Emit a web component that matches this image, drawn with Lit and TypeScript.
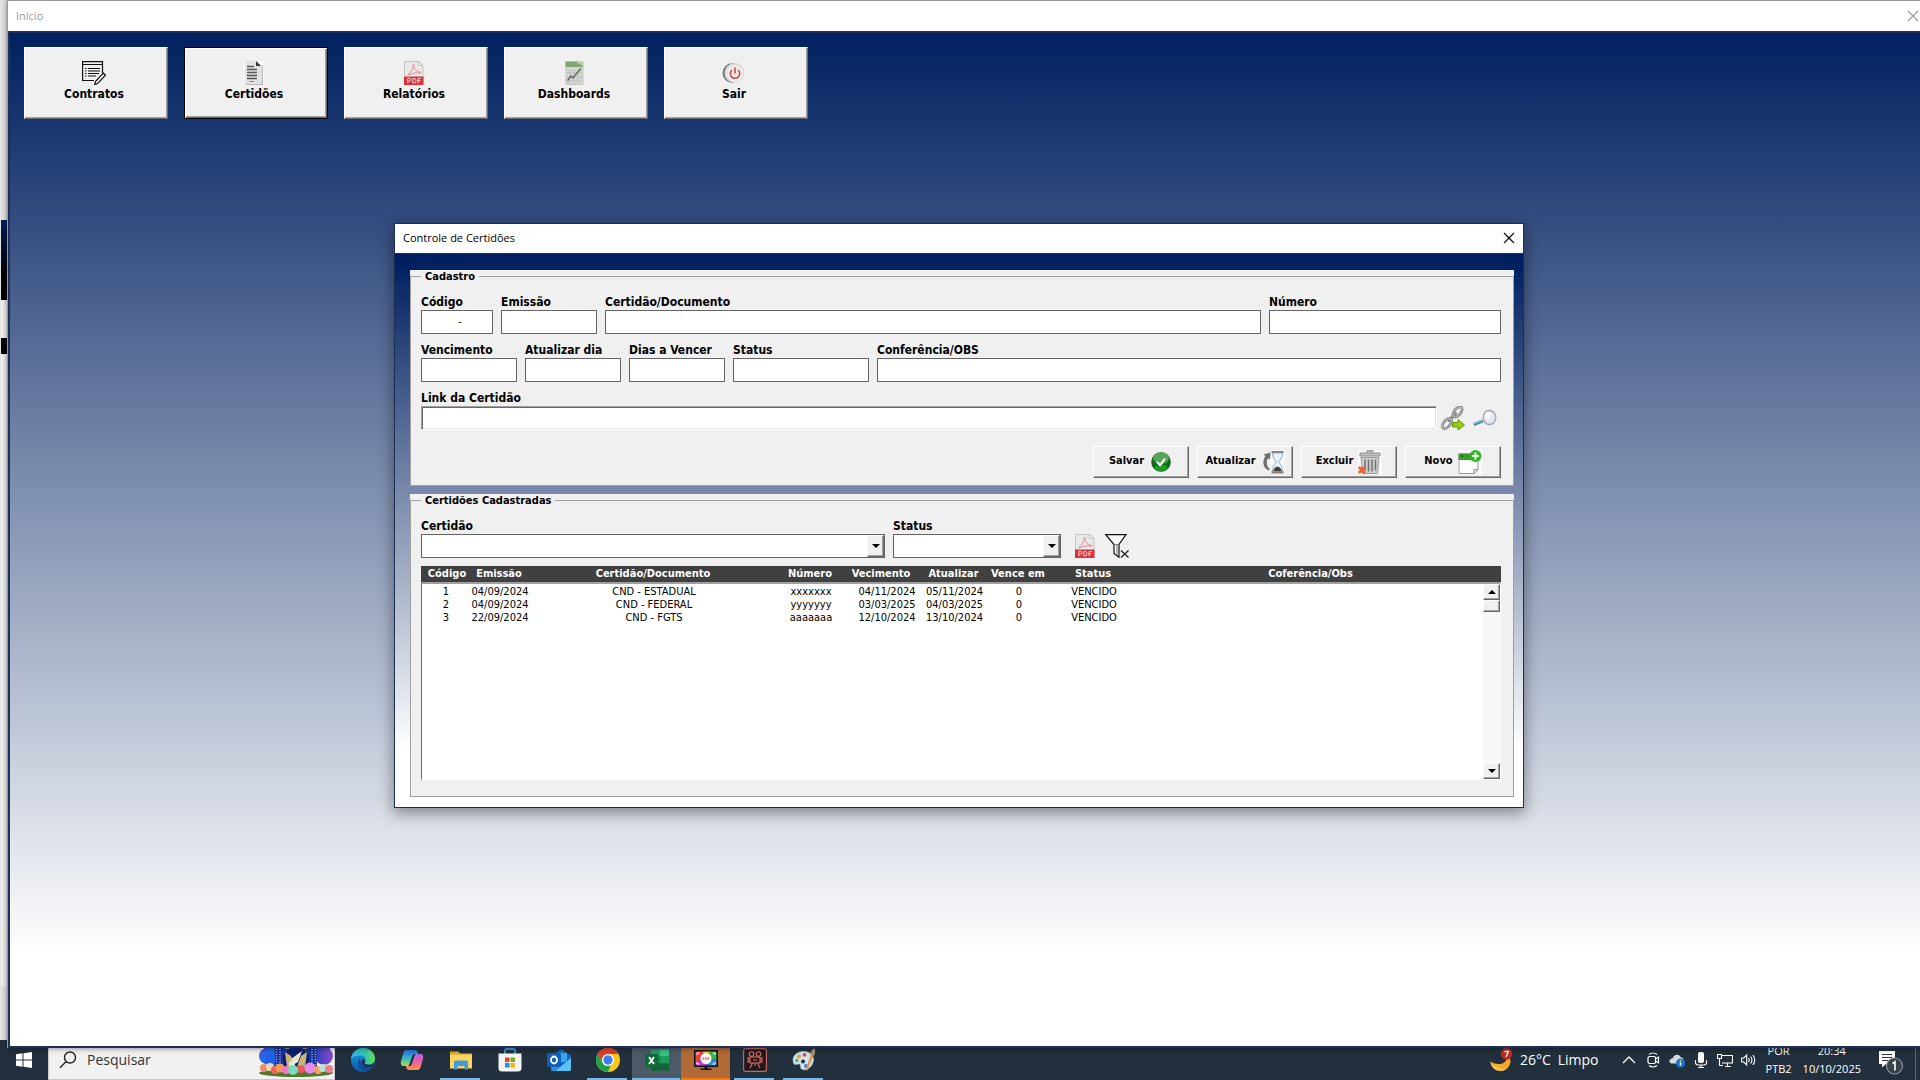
import { LitElement, html, svg, css, type TemplateResult } from "lit";
import { customElement, property } from "lit/decorators.js";

type Shape = { box: string; body: TemplateResult };

const shapes: Record<string, Shape> = {
  pdf: {
    box: "0 0 24 24",
    body: svg`
      <path d="M2.500 .5h14l4.500 4V23.500H2.500z" fill="#e9e9e9" stroke="#c4c4c4"/>
      <path d="M16.500 .5v4h4.500z" fill="#fafafa" stroke="#c4c4c4"/>
      <path d="M6 13.300c2.500-1.500 5-5.800 5.300-9.300.1-.9 1.100-.7.9.2-.6 3 2 6.800 6.300 7.100.8.100.7 1-.2.900-3.800-.8-7.800-.2-11.300 1.500-1 .6-1.700.2-1-.4z" fill="none" stroke="#e8838c" stroke-width="1"/>
      <rect x="2" y="15.500" width="19.500" height="8.500" fill="#dc303a"/>
      <path d="M5.800 22.200v-5h1.600q1.500 0 1.500 1.500T7.400 20.200H6M10.800 17.500v4.400h1.200q2 0 2-2.200t-2-2.200zM16 22.200v-4.700h3M16 19.700h2.500" fill="none" stroke="#fbd9db" stroke-width="1"/>`,
  },
  contract: {
    box: "0 0 24 24",
    body: svg`
      <path d="M12 19.500H.6V.6H20.500V12" fill="none" stroke="#111" stroke-width="1.200"/>
      <path d="M.6 3.500H20.500" stroke="#111"/>
      <path d="M3 7.500h1.500M6 7.500h12M3 10h1.500M6 10h12M3 12.500h1.500M6 12.500h11M3 15h1.500M6 15h8" stroke="#111" stroke-width="1.200"/>
      <path d="M13.500 20.500 21.300 12.200l2.200 2-7.900 8.300-3 1z" fill="#fff" stroke="#111" stroke-width="1.200"/>`,
  },
  document: {
    box: "0 0 24 24",
    body: svg`
      <rect x="2" y="0" width="20" height="24" fill="#fafafa"/>
      <path d="M3 0h11l6 5v18H3z" fill="#e2e2e2"/><path d="M20 5v18H3l1 1h17V5z" fill="#b5b5b5"/>
      <path d="M14 0v5h5z" fill="#333"/>
      <path d="M5 5.500h7M5 8.500h10M5 11.500h10M5 14.500h10M5 17.500h10" stroke="#555" stroke-width="1.400"/>
      <path d="M7 20.500h5" stroke="#888"/>`,
  },
  dashboard: {
    box: "0 0 24 24",
    body: svg`
      <path d="M4 1h17v22.500H4z" fill="#d3d6d3" stroke="#b9bcb9" stroke-width=".8"/>
      <path d="M3.500 .5h13L19 2l2.500 4H3.500z" fill="#7fa871"/><path d="M15 .5 21.500 1v5q-3-4-6.500-3.500z" fill="#b9d3ac"/>
      <path d="M8 8v13M12 8v13M16 8v13M5 12h15M5 16h15M5 20h15" stroke="#b4b9b6" stroke-width=".7"/>
      <path d="M5.500 19.500 9 15l2 2 4-5 4-4.500" fill="none" stroke="#5d6561" stroke-width="1.400"/>`,
  },
  power: {
    box: "0 0 24 24",
    body: svg`
      <circle cx="10.500" cy="12" r="10" fill="#777"/><circle cx="12.500" cy="12" r="10" fill="#d9d9d9"/>
      <circle cx="13" cy="12.500" r="8.500" fill="#ececec"/>
      <path d="M10 9a4.700 4.700 0 1 0 6 0M13 6.500v6" fill="none" stroke="#d14b40" stroke-width="1.600"/>`,
  },
  check: {
    box: "0 0 24 24",
    body: svg`
      <circle cx="12" cy="12" r="9.800" fill="#0f6b18"/><ellipse cx="12" cy="8" rx="8" ry="6" fill="#55a757"/>
      <ellipse cx="12" cy="18" rx="6.500" ry="3.500" fill="#1d9a27"/>
      <path d="m8 12 3.200 3.200L16 8.500" fill="none" stroke="#fff" stroke-width="2"/>`,
  },
  hourglass: {
    box: "0 0 24 24",
    body: svg`
      <rect x="9.500" y="0" width="14" height="24" fill="#fafafa"/>
      <path d="M7.500 20.500C2 18 .8 11 4.500 6L2.500 4.500 9.500 2.500 9 9.500 7.200 8C4.800 12 5.500 16.500 9 19z" fill="#6f6f6f"/>
      <path d="M10.500 1h12v2h-12zM10.500 21h12v2.500h-12z" fill="#8d7a68"/>
      <path d="M11.500 3h10c0 4.500-2 6.500-4 9 2 2.500 4 4.500 4 9h-10c0-4.500 2-6.500 4-9-2-2.500-4-4.500-4-9z" fill="#eaf2fa" stroke="#8facd0"/>
      <path d="M12.500 21c.5-3 2-4 4-4.500 2 .5 3.500 1.500 4 4.500z" fill="#3d4038"/>`,
  },
  trash: {
    box: "0 0 24 24",
    body: svg`
      <rect x="0" y="0" width="24" height="24" fill="#fafafa"/>
      <path d="M9 2.500V.8h6v1.700M2 3h20v3H2z" fill="#c4c4c4" stroke="#8b8b8b"/>
      <path d="M3 7.500h18l-1.500 16h-15z" fill="#cfcfcf" stroke="#9a9a9a"/>
      <path d="M7 9.500v11M10.500 9.500v12M14 9.500v12M17.500 9.500v11" stroke="#727272" stroke-width="1.500"/>
      <path d="m.8 17 6 6M6.800 17l-6 6" stroke="#f0602f" stroke-width="2.800"/>`,
  },
  add: {
    box: "0 0 24 24",
    body: svg`
      <rect x="0" y="0" width="24" height="24" fill="#fafafa"/>
      <path d="M1 4h19v16l-3.500 3.500H1z" fill="#fdfdfd" stroke="#9a9a9a"/><path d="M20 19.500h-4V23.500" fill="#ddd" stroke="#999"/>
      <path d="M.5 3.500H20V10H.5z" fill="#3d9c2d"/><circle cx="4" cy="6" r="1" fill="#164c10"/>
      <circle cx="17.500" cy="6" r="6" fill="#33b42c"/><path d="M17.500 2.500v7M14 6h7" stroke="#e7ffe2" stroke-width="2"/>`,
  },
  link: {
    box: "0 0 24 24",
    body: svg`
      <g fill="none" stroke-linecap="round">
        <ellipse cx="16.500" cy="6" rx="6" ry="3.200" transform="rotate(-50 16.500 6)" stroke="#858585" stroke-width="2.800"/>
        <ellipse cx="6" cy="17.500" rx="6" ry="3.200" transform="rotate(-50 6 17.500)" stroke="#858585" stroke-width="2.800"/>
        <path d="M8 14.500 14.500 7.500" stroke="#6d6d6d" stroke-width="3"/><path d="M8 14.500 14.500 7.500" stroke="#c8c8c8"/>
        <ellipse cx="16.500" cy="6" rx="6" ry="3.200" transform="rotate(-50 16.500 6)" stroke="#cfcfcf" stroke-width=".8"/>
        <ellipse cx="6" cy="17.500" rx="6" ry="3.200" transform="rotate(-50 6 17.500)" stroke="#cfcfcf" stroke-width=".8"/>
      </g>
      <path d="M11.500 16.500h5.500V13.500l6.500 5.500-6.500 5v-3h-5.500z" fill="#94cc12" stroke="#67960b"/>`,
  },
  magnifier: {
    box: "0 0 24 24",
    body: svg`
      <path d="M.8 18.500 9.500 15" stroke="#3f86b4" stroke-width="3"/><path d="M1 17.500 9 14.500" stroke="#a6d4ef"/>
      <path d="M9 15.500l3-1.500" stroke="#8d8d8d" stroke-width="1.500"/>
      <ellipse cx="16.500" cy="11.500" rx="6.300" ry="7" fill="#e4e6f6" stroke="#a2a2aa" stroke-width="1.300"/>
      <ellipse cx="15" cy="9.500" rx="3" ry="3.800" fill="#fafaff"/>`,
  },
  funnel: {
    box: "0 0 24 24",
    body: svg`
      <path d="M.8 .7H21L14 10.500v12.800l-5-3.800v-9z" fill="#fafafa" stroke="#111" stroke-width="1.200"/>
      <path d="M9 10.500h5M12 11v10" stroke="#777"/>
      <rect x="15" y="15" width="9" height="9" fill="#f0f0f0"/><path d="m16 16.500 7.500 7M23.500 16.500l-7.500 7" stroke="#222" stroke-width="1.300"/>`,
  },
  close: { box: "0 0 12 12", body: svg`<path d="m1 1 10 10M11 1 1 11" stroke="currentColor" stroke-width="1.100"/>` },
  down: { box: "0 0 8 4", body: svg`<path d="M0 0h8L4 4z" fill="#000"/>` },
  up: { box: "0 0 8 4", body: svg`<path d="M0 4h8L4 0z" fill="#000"/>` },
  windows: {
    box: "0 0 16 16",
    body: svg`<path d="M0 2.300 6.500 1.300V7.500H0zM7.500 1.200 16 0v7.500H7.500zM0 8.500h6.500v6.200L0 13.700zM7.500 8.500H16V16l-8.500-1.200z" fill="#fff"/>`,
  },
  search: {
    box: "0 0 18 18",
    body: svg`<circle cx="11" cy="6.500" r="5.500" fill="none" stroke="#222" stroke-width="1.400"/><path d="M7.200 10.500 1 16.700" stroke="#222" stroke-width="1.400"/>`,
  },
  edge: {
    box: "0 0 24 24",
    body: svg`
      <defs>
        <linearGradient id="eg" x1="0" y1="0" x2="1" y2="0"><stop offset="0" stop-color="#2fb6ea"/><stop offset=".6" stop-color="#35c6b0"/><stop offset="1" stop-color="#66dd4c"/></linearGradient>
        <linearGradient id="eb" x1="0" y1="0" x2="0" y2="1"><stop offset="0" stop-color="#1b9be2"/><stop offset="1" stop-color="#0c55a8"/></linearGradient>
      </defs>
      <circle cx="12" cy="12" r="12" fill="url(#eb)"/>
      <path d="M0 11.500C.5 4.500 6 0 12 0c7 0 12 5 12 10.500 0 4-3 6-6.500 6-3 0-4.500-1-3.800-2.200C15.500 12 14.500 7.500 9.500 7.500 5 7.500 1.500 9 0 11.500z" fill="url(#eg)"/>
      <path d="M9 10.500C5 14 7.500 22 15 23.500c3-.8 5.500-2.500 7-5-3.500 2-11 2-13-8z" fill="#0f4c99"/>
      <path d="M13.800 14.200c-.7 1.300 1 2.500 4 2.500 2 0 4.200-.8 5.200-2.300-.3 1.800-.8 3-1.600 4.300-5 1.800-10-.2-10.400-4.400-.2-1.800 1-3 2-3 1.300.4 1.500 1.700.8 2.900z" fill="#223140"/>`,
  },
  copilot: {
    box: "0 0 24 24",
    body: svg`
      <defs>
        <linearGradient id="ca" x1="0" y1="0" x2="0" y2="1"><stop offset="0" stop-color="#2a6fe0"/><stop offset=".5" stop-color="#30b7c8"/><stop offset="1" stop-color="#b6d84a"/></linearGradient>
        <linearGradient id="cb" x1="0" y1="0" x2="0" y2="1"><stop offset="0" stop-color="#a86be8"/><stop offset=".5" stop-color="#ec5d9d"/><stop offset="1" stop-color="#f79a4a"/></linearGradient>
      </defs>
      <path d="M6.500 2h8.500c2 0 2.600 2 3.200 4h-3.600c-1.500 0-2.100 1-2.600 2.600L9.500 16c-.5 1.500-1.200 2-2.500 2H3.500C1 18 .3 15.500 1 13L3.500 4.500C4 3 5 2 6.500 2z" fill="url(#ca)"/>
      <path d="M17.500 22H9c-2 0-2.600-2-3.200-4h3.600c1.500 0 2.100-1 2.600-2.600L14.500 8c.5-1.500 1.200-2 2.500-2h3.500c2.500 0 3.200 2.500 2.500 5l-2.500 8.500c-.5 1.500-1.500 2.500-3 2.500z" fill="url(#cb)"/>`,
  },
  explorer: {
    box: "0 0 24 24",
    body: svg`
      <path d="M1 3.500h8.500l1.500 2H23V20H1z" fill="#e2a52b"/><path d="M1 6.500h22V20.500H1z" fill="#fbd45f"/>
      <path d="M5 21.500v-7.500q0-1.500 1.500-1.500h11q1.500 0 1.500 1.500v7.500h-3.500V18h-7v3.500z" fill="#3f9be0"/>`,
  },
  store: {
    box: "0 0 24 24",
    body: svg`
      <path d="M7 7V2.500Q7 1 8.500 1h7Q17 1 17 2.500V7" fill="none" stroke="#2fa0d8" stroke-width="1.800"/>
      <path d="M.5 5.500h23V20q0 3.500-3.500 3.500H4Q.5 23.500.5 20z" fill="#f3f3f3"/>
      <path d="M7 9.500h4.500V14H7z" fill="#e2452d"/><path d="M12.500 9.500H17V14h-4.500z" fill="#6bb21f"/><path d="M7 15h4.500v4.500H7z" fill="#1d8fd8"/><path d="M12.500 15H17v4.500h-4.500z" fill="#f6b40f"/>`,
  },
  outlook: {
    box: "0 0 24 24",
    body: svg`
      <path d="M4 8 14.500 1 24 8v13q0 2-2 2H6q-2 0-2-2z" fill="#1769c0"/><path d="M9 5h11v9H9z" fill="#3aa4ec"/>
      <path d="M4 11 14 18 24 10v11q0 2-2 2H6q-2 0-2-2z" fill="#2b91e2"/><path d="m24 10-15 13h13q2 0 2-2z" fill="#59c4f5"/>
      <rect x="0" y="5" width="14" height="14" rx="1.500" fill="#0f5fb8"/><ellipse cx="7" cy="12" rx="3" ry="3.500" fill="none" stroke="#fff" stroke-width="1.800"/>`,
  },
  chrome: {
    box: "0 0 24 24",
    body: svg`
      <circle cx="12" cy="12" r="12" fill="#f9c920"/>
      <path d="M1.600 6A12 12 0 0 1 22.400 6H12a6 6 0 0 0-5.200 9z" fill="#e33b2e"/>
      <path d="M1.600 6 6.800 15a6 6 0 0 0 8 2.300L12 24A12 12 0 0 1 1.600 6z" fill="#23a04b"/>
      <circle cx="12" cy="12" r="6" fill="#fff"/><circle cx="12" cy="12" r="4.700" fill="#3c7ff0"/>`,
  },
  excel: {
    box: "0 0 24 24",
    body: svg`
      <path d="M6 1.500h18v21H6z" fill="#1a7a46"/><path d="M15 1.500h9v7h-9z" fill="#36c281"/><path d="M6 1.500h9v7H6z" fill="#22a066"/><path d="M15 8.500h9v7h-9z" fill="#189e59"/><path d="M6 15.500h18v7H6z" fill="#17613a"/>
      <path d="M0 6h13v13H0z" fill="#0f6b3b"/><path d="m4 9 5 7M9 9l-5 7" stroke="#fff" stroke-width="1.800"/>`,
  },
  recorder: {
    box: "0 0 24 24",
    body: svg`
      <path d="M0 2h24v17H0z" fill="#101010"/><path d="M1.500 3.500h7L12 10 1.500 14z" fill="#e8453c"/><path d="M8.500 3.500h8L12 10z" fill="#f6c22c"/><path d="M16.500 3.500h6V12L12 10z" fill="#3bb54a"/><path d="M22.500 12v5.500H14L12 10z" fill="#2d88e0"/><path d="M1.500 14v3.500H14L12 10z" fill="#c23ad0"/>
      <circle cx="12" cy="10.500" r="5.500" fill="#fff"/><path d="M8.500 10.500h7" stroke="#f0604a" stroke-width="2" stroke-dasharray="1.800 .7"/>
      <path d="M3 7V5h2.500M21 7V5h-2.500M3 14v2h2.500M21 14v2h-2.500" fill="none" stroke="#fff"/>
      <path d="M10.500 19h3v1.500h4V22h-11v-1.500h4z" fill="#101010"/>`,
  },
  camera: {
    box: "0 0 24 24",
    body: svg`
      <rect x=".6" y=".6" width="22.800" height="22.800" rx="2" fill="#20181c" stroke="#c7655c" stroke-width="1.200"/>
      <g fill="none" stroke="#d56d62" stroke-width="1.100"><circle cx="8.500" cy="6" r="2.300"/><circle cx="15.500" cy="6" r="2.300"/><rect x="7" y="9" width="10" height="6"/><path d="M7 11 5 10v4l2-1M17 11l2-1v4l-2-1M9.500 15 7 20M14.500 15l2.500 5M12 15v3M10 12h4"/></g>`,
  },
  paint: {
    box: "0 0 24 24",
    body: svg`
      <path d="M1.500 15C-1 8 6 2.500 12.500 3.500 19 4 23 8.500 21 14.500 19.500 20 13 23.500 9.500 21 7.500 19.500 9.500 17 7.500 16 5.500 15.300 3 18 1.500 15z" fill="#cfe4f0" stroke="#a9c6d6" stroke-width=".6"/>
      <circle cx="7" cy="8.500" r="2" fill="#ef9a35"/><circle cx="12.500" cy="6.800" r="1.900" fill="#df4b3f"/><circle cx="4.800" cy="12.500" r="1.700" fill="#5db04b"/><circle cx="11" cy="13.500" r="2" fill="#233140"/><circle cx="14" cy="18" r="2" fill="#3f87d8"/>
      <path d="M13.500 22 19 6l2.500 1L15.500 22.500z" fill="#dc9a45"/><path d="M18.500 7c-.5-4 2-5.500 4-7 .8 2.500 1.500 5-.8 8z" fill="#a58d6f"/>`,
  },
  moon: {
    box: "0 0 24 24",
    body: svg`
      <path d="M17 6.500c2.500 5-1 9-6 9.500-4 .4-7.500-1-9.500-2.500C2 19 6 23 11.500 23c7 0 11.500-7 9.500-12.500z" fill="#f5a82c"/>
      <path d="M1.500 13.500C2 19 6 23 11.500 23c2.500 0 5-1 6.500-2.500-6 1-13-1-16.500-7z" fill="#f8c04e"/>
      <circle cx="17.500" cy="5.800" r="5.800" fill="#c4281c"/><path d="M15.500 3.500h4L17 9" fill="none" stroke="#fff" stroke-width="1.300"/>`,
  },
  chevron: { box: "0 0 16 16", body: svg`<path d="M2 11 8 5l6 6" fill="none" stroke="#fff" stroke-width="1.300"/>` },
  meet: {
    box: "0 0 16 16",
    body: svg`<g fill="none" stroke="#fff" stroke-width="1.200"><rect x="3" y="4.500" width="7.500" height="7" rx="1.500"/><path d="m10.500 7 3-2v6l-3-2M4 2.500Q8-.5 12 2.500M4 13.500q4 3 8 0"/></g>`,
  },
  cloud: {
    box: "0 0 16 16",
    body: svg`<path d="M3 11.500C-1 11 0 6.500 3.500 6.500 4.500 2 10 1.500 11.500 5c3 .2 3.500 3 3 6.500z" fill="#d5d9dc"/><circle cx="11.500" cy="11" r="4.500" fill="#1478d4"/><path d="M11.500 8v1M11.500 10v3.500" stroke="#fff" stroke-width="1.300"/>`,
  },
  mic: {
    box: "0 0 16 16",
    body: svg`<rect x="5" y="0" width="6" height="11" rx="2" fill="#fff"/><path d="M2.500 8v2.500q0 2.500 2.500 2.500h6q2.500 0 2.500-2.500V8M8 13v2.500M5 15.500h6" fill="none" stroke="#fff" stroke-width="1.100"/>`,
  },
  network: {
    box: "0 0 16 16",
    body: svg`<path d="M5 3.500h10.500v7.500H5M8 14.500h6M10.500 11v3.500M.5 2.500h4v4h-4zM2.500 6.500v7H6" fill="none" stroke="#fff" stroke-width="1.100"/>`,
  },
  speaker: {
    box: "0 0 16 16",
    body: svg`<path d="M.7 6h2l3-3v10l-3-3h-2zM7.500 6q1.500 2 0 4M9.700 4.500q2.500 3.500 0 7M12 3q3.500 5 0 10" fill="none" stroke="#fff" stroke-width="1.100"/>`,
  },
  notice: {
    box: "0 0 26 26",
    body: svg`
      <path d="M1 2h16v13H8l-4 3.500V15H1z" fill="#fff"/><path d="M4 5.500h10M4 8.500h10M4 11.500h6" stroke="#27333f" stroke-width="1.200"/>
      <circle cx="16.500" cy="17" r="8" fill="#3a4249" stroke="#8c9298" stroke-width="1.200"/><path d="M14.500 14.500 17 12.800V21.500" fill="none" stroke="#fff" stroke-width="1.600"/>`,
  },
  party: {
    box: "0 0 76 34",
    body: svg`
      <defs>
        <linearGradient id="pl" x1="0" y1="0" x2="1" y2="1"><stop offset="0" stop-color="#5a48c8"/><stop offset=".5" stop-color="#1f6df0"/><stop offset="1" stop-color="#1c49a8"/></linearGradient>
        <linearGradient id="pr" x1="0" y1="0" x2="1" y2="0"><stop offset="0" stop-color="#2b40b8"/><stop offset="1" stop-color="#8a4bd0"/></linearGradient>
      </defs>
      <ellipse cx="38" cy="30" rx="37" ry="4" fill="#54772b"/>
      <circle cx="13" cy="5" r="7" fill="#3558c4"/><circle cx="9" cy="13" r="8" fill="url(#pl)"/><circle cx="14" cy="17" r="7" fill="#1d62e6"/>
      <circle cx="64" cy="5" r="8" fill="#3c46bd"/><circle cx="66" cy="13" r="9" fill="url(#pr)"/>
      <path d="M17 0h42v26H17z" fill="#16319b"/>
      <path d="M18.500 1v24M22 1v24M54 1v24M57.500 1v24" stroke="#a9b7ea" stroke-width="1.500" stroke-dasharray="1 1.500"/>
      <path d="M17 2h42" stroke="#a9b7ea" stroke-dasharray="2 1.500"/>
      <path d="M25 25V12q13-14 26 0v13z" fill="#101f6e"/>
      <path d="m27 9 6 4 4 11h-8zM49 9l-6 4-4 11h8z" fill="#c8b676"/><path d="m33 16 11-8-4 11-5 3z" fill="#eee6cc"/>
      <path d="M27 5h4M36 4h4M45 5h4" stroke="#d9b34a" stroke-width="1.500"/>
      <g><circle cx="6" cy="25" r="4" fill="#ef8b6c"/><circle cx="12" cy="24" r="4" fill="#f3d3b5"/><circle cx="17" cy="27" r="4" fill="#f0645f"/><circle cx="22" cy="25" r="4.500" fill="#f59a55"/><circle cx="28" cy="27" r="4" fill="#ee77c8"/><circle cx="43" cy="26" r="4" fill="#ec5c5c"/><circle cx="34" cy="21" r="3" fill="#d9efdc"/><circle cx="35" cy="27" r="5" fill="#79dfb8"/><circle cx="52" cy="25" r="5.500" fill="#e58af0"/><circle cx="60" cy="27" r="4" fill="#f2a06c"/><circle cx="65" cy="25" r="4" fill="#b7e3d4"/><circle cx="71" cy="26" r="4" fill="#ef7e8e"/></g>`,
  },
};

const icon = (name: string, cls = "i24") =>
  html`<svg class=${cls} viewBox=${shapes[name].box} aria-hidden="true">${shapes[name].body}</svg>`;

const base = css`
  * { box-sizing: border-box; }
  button, input, select { font: inherit; color: inherit; margin: 0; padding: 0; border-radius: 0; }
  svg { display: block; flex: none; }
  .i24 { width: 24px; height: 24px; }
  .i16 { width: 16px; height: 16px; }
  .i12 { width: 12px; height: 12px; }
  .arrow { width: 8px; height: 4px; }
  .close { display: grid; place-items: center; width: 24px; height: 24px; border: 0; background: none; }
`;

/** Dialog with the certificate form and the list of registered certificates. */
@customElement("certificate-dialog")
export class CertificateDialog extends LitElement {
  static styles = [
    base,
    css`
      :host {
        display: block;
        background: linear-gradient(#002060 40px, #fff 90%);
        border: 1px solid #1b2e55;
        box-shadow: 0 4px 14px 1px rgba(0, 0, 0, 0.4);
        font: 11px/14px "DejaVu Sans Condensed", "DejaVu Sans", sans-serif;
        color: #000;
      }
      .title {
        display: flex; align-items: center; justify-content: space-between;
        height: 29px; padding: 0 2px 0 8px; background: #fff;
        font: 11px/16px "Open Sans", sans-serif;
      }
      .title h2 { margin: 0; font: inherit; }
      .body { display: grid; gap: 8px; padding: 16px 9px 10px 15px; border-top: 1px solid #1b2e55; }
      .frame { background: #f0f0f0; }
      fieldset {
        margin: 0; min-width: 0; padding: 10px 12px 7px 10px;
        border: 1px solid #a0a0a0;
      }
      legend { padding: 0 4px; font-weight: 700; }
      .rows { display: grid; gap: 8px; }
      .row { display: flex; gap: 8px; align-items: flex-end; }
      .field { display: grid; min-width: 0; }
      .field label { font: bold 12px/16px "DejaVu Sans Condensed", "DejaVu Sans", sans-serif; white-space: nowrap; }
      .field input, .field select {
        width: 100%; height: 24px; padding: 0 4px; border: 1px solid #646464; background: #fff; outline: 0; appearance: none;
      }
      .field input { text-align: center; }
      .field input.sunken { border-color: #a0a0a0 #fff #fff #a0a0a0; box-shadow: inset 1px 1px #696969, inset -1px -1px #e3e3e3; }
      .w72 { width: 72px; } .w96 { width: 96px; } .w136 { width: 136px; } .w168 { width: 168px; } .w232 { width: 232px; } .w464 { width: 464px; }
      .grow { flex: 1; }
      .link { gap: 4px; }
      .tools { display: flex; gap: 8px; padding-right: 4px; }
      .filters .tools { padding-left: 4px; }
      .tool { border: 0; background: none; }
      .actions { display: flex; justify-content: flex-end; gap: 8px; padding-top: 8px; }
      .action {
        display: flex; align-items: center; justify-content: center; gap: 5px;
        width: 96px; height: 32px; background: #f0f0f0; font-weight: 700; line-height: 16px;
        border: 1px solid; border-color: #fff #696969 #696969 #fff; box-shadow: inset -1px -1px #a0a0a0;
      }
      .action span { padding-bottom: 2px; }
      .combo { display: grid; grid-template-columns: 1fr 18px; }
      .combo select { grid-area: 1 / 1 / 2 / 3; }
      .raised {
        display: grid; place-items: center; background: #f0f0f0; padding: 0;
        border: 1px solid; border-color: #fff #696969 #696969 #fff; box-shadow: inset -1px -1px #a0a0a0;
      }
      .combo .raised { grid-area: 1 / 2 / 2 / 3; margin: 1px 1px 1px 0; pointer-events: none; }
      .list { display: grid; grid-template-columns: 1fr 18px; padding-bottom: 9px; }
      table { display: contents; }
      thead { display: block; grid-column: 1 / 3; background: #404040; color: #fff; padding: 0 18px 0 0; }
      tbody {
        display: block; min-height: 198px; background: #fff; padding: 1px 0;
        border: solid; border-width: 2px 0 1px 1px; border-color: #a0a0a0 #fff #fff #696969;
      }
      tr { display: grid; grid-template-columns: 48px 60px 248px 66px 76px 69px 60px 90px 1fr; }
      th, td { padding: 0; text-align: center; white-space: nowrap; }
      th { line-height: 16px; }
      th:first-child { padding-left: 4px; }
      td { line-height: 13px; }
      td:nth-child(5) { padding-left: 10px; }
      .scroll {
        display: grid; grid-template-rows: 16px 12px 1fr 16px;
        background: #f8f8f8; border: solid; border-width: 2px 1px 1px 0; border-color: #a0a0a0 #fff #fff;
      }
    `,
  ];

  private headings = ["Código", "Emissão", "Certidão/Documento", "Número", "Vecimento", "Atualizar", "Vence em", "Status", "Coferência/Obs"];

  private records = [
    ["1", "04/09/2024", "CND - ESTADUAL", "xxxxxxx", "04/11/2024", "05/11/2024", "0", "VENCIDO", ""],
    ["2", "04/09/2024", "CND - FEDERAL", "yyyyyyy", "03/03/2025", "04/03/2025", "0", "VENCIDO", ""],
    ["3", "22/09/2024", "CND - FGTS", "aaaaaaa", "12/10/2024", "13/10/2024", "0", "VENCIDO", ""],
  ];

  private field(id: string, label: string, size: string, value = "", kind = "") {
    return html`<div class="field ${size}"><label for=${id}>${label}</label><input id=${id} class=${kind} type="text" .value=${value} /></div>`;
  }

  private combo(id: string, label: string, size: string) {
    return html`<div class="field ${size}">
      <label for=${id}>${label}</label>
      <div class="combo"><select id=${id}><option></option></select><span class="raised">${icon("down", "arrow")}</span></div>
    </div>`;
  }

  private action(label: string, name: string) {
    return html`<button class="action" type="button"><span>${label}</span>${icon(name)}</button>`;
  }

  private tool(label: string, name: string) {
    return html`<button class="tool" type="button" aria-label=${label}>${icon(name)}</button>`;
  }

  render() {
    return html`
      <header class="title">
        <h2>Controle de Certidões</h2>
        <button class="close" type="button" aria-label="Fechar">${icon("close", "i12")}</button>
      </header>
      <div class="body">
        <div class="frame">
          <fieldset>
            <legend>Cadastro</legend>
            <div class="rows">
              <div class="row">
                ${this.field("codigo", "Código", "w72", "  -")} ${this.field("emissao", "Emissão", "w96")}
                ${this.field("documento", "Certidão/Documento", "grow")} ${this.field("numero", "Número", "w232")}
              </div>
              <div class="row">
                ${this.field("vencimento", "Vencimento", "w96")} ${this.field("atualizar", "Atualizar dia", "w96")}
                ${this.field("dias", "Dias a Vencer", "w96")} ${this.field("status", "Status", "w136")}
                ${this.field("obs", "Conferência/OBS", "grow")}
              </div>
              <div class="row link">
                ${this.field("link", "Link da Certidão", "grow", "", "sunken")}
                <div class="tools">${this.tool("Abrir link", "link")}${this.tool("Procurar", "magnifier")}</div>
              </div>
              <div class="actions">
                ${this.action("Salvar", "check")} ${this.action("Atualizar", "hourglass")}
                ${this.action("Excluir", "trash")} ${this.action("Novo", "add")}
              </div>
            </div>
          </fieldset>
        </div>
        <div class="frame">
          <fieldset>
            <legend>Certidões Cadastradas</legend>
            <div class="rows">
              <div class="row filters">
                ${this.combo("filtro-certidao", "Certidão", "w464")} ${this.combo("filtro-status", "Status", "w168")}
                <div class="tools">${this.tool("Exportar PDF", "pdf")}${this.tool("Limpar filtro", "funnel")}</div>
              </div>
              <div class="list">
                <table>
                  <thead><tr>${this.headings.map((h) => html`<th scope="col">${h}</th>`)}</tr></thead>
                  <tbody>${this.records.map((r) => html`<tr>${r.map((c) => html`<td>${c}</td>`)}</tr>`)}</tbody>
                </table>
                <div class="scroll">
                  <button class="raised" type="button" aria-label="Subir">${icon("up", "arrow")}</button>
                  <span class="raised"></span><span></span>
                  <button class="raised" type="button" aria-label="Descer">${icon("down", "arrow")}</button>
                </div>
              </div>
            </div>
          </fieldset>
        </div>
      </div>
    `;
  }
}

/** Button of the main menu, an icon over its caption. */
@customElement("menu-button")
export class MenuButton extends LitElement {
  @property() label = "";
  @property() icon = "";
  @property({ type: Boolean }) current = false;

  static styles = [
    base,
    css`
      :host { display: block; }
      .menu {
        display: flex; flex-direction: column; align-items: center; gap: 1px;
        width: 144px; height: 72px; padding: 13px 4px 0 0; background: #f0f0f0; color: #000;
        border: 1px solid; border-color: #fff #696969 #696969 #fff; box-shadow: inset -1px -1px #a0a0a0;
        font: bold 12px/16px "DejaVu Sans Condensed", "DejaVu Sans", sans-serif;
      }
      .menu.current { border-color: #000; box-shadow: inset 1px 1px #fff, inset -1px -1px #696969, inset -2px -2px #a0a0a0; }
    `,
  ];

  render() {
    return html`<button type="button" class="menu ${this.current ? "current" : ""}">${icon(this.icon)}${this.label}</button>`;
  }
}

@customElement("task-bar")
export class TaskBar extends LitElement {
  static styles = [
    base,
    css`
      :host { display: flex; height: 40px; background: #22303d; color: #fff; font: 11px/18px "Open Sans", sans-serif; }
      button { border: 0; background: none; color: inherit; }
      .start { display: grid; place-items: center; width: 48px; }
      .search { display: flex; align-items: center; width: 287px; padding-left: 10px; gap: 10px; background: #f1f1f1; color: #333; border: 1px solid #c9c9c9; }
      .search label { display: grid; place-items: center; }
      .i18 { width: 18px; height: 18px; }
      .search input { flex: 1; min-width: 0; border: 0; background: none; outline: 0; font-size: 14px; }
      .search input::placeholder { color: #333; opacity: 1; }
      .party { width: 76px; height: 34px; }
      .apps { display: flex; padding-left: 3px; }
      .app { position: relative; display: grid; place-items: center; width: 49px; padding: 0; }
      .app.open::after { content: ""; position: absolute; left: 4px; right: 5px; bottom: 0; height: 2px; background: #76b9ed; }
      .app.active { background: #4c5a68; }
      .app.active::after { left: 0; right: 1px; }
      .app.alert { background: #b16a35; }
      .app.alert::after { left: 0; right: 0; background: #f57c13; }
      .tray { display: flex; align-items: center; margin-left: auto; }
      .weather { display: flex; align-items: center; gap: 7px; font-size: 14px; padding-right: 22px; }
      .icons { display: flex; gap: 8px; align-items: center; }
      .stack { text-align: center; margin-left: 9px; }
      .stack.clock { margin-left: 11px; }
      .notice { margin-left: 17px; padding: 4px 11px 0 0; border-right: 1px solid #5c6771; margin-right: 4px; align-self: stretch; display: grid; place-items: center; }
      .i26 { width: 26px; height: 26px; }
    `,
  ];

  private apps = [
    ["edge", "Edge", ""], ["copilot", "Copilot", ""], ["explorer", "Explorador", "open"], ["store", "Loja", ""],
    ["outlook", "Outlook", ""], ["chrome", "Chrome", "open"], ["excel", "Excel", "open active"],
    ["recorder", "Gravador", "open alert"], ["camera", "Vídeo", "open"], ["paint", "Paint", "open"],
  ];

  render() {
    return html`
      <button class="start" type="button" aria-label="Iniciar">${icon("windows", "i16")}</button>
      <div class="search">
        <label for="q" aria-label="Pesquisar">${icon("search", "i18")}</label>
        <input id="q" type="text" placeholder="Pesquisar" />
        ${icon("party", "party")}
      </div>
      <nav class="apps">
        ${this.apps.map(([i, name, state]) => html`<button class="app ${state}" type="button" aria-label=${name}>${icon(i)}</button>`)}
      </nav>
      <div class="tray">
        <div class="weather">${icon("moon")}<span>26°C</span><span>Limpo</span></div>
        <div class="icons">${["chevron", "meet", "cloud", "mic", "network", "speaker"].map((i) => icon(i, "i16"))}</div>
        <div class="stack">POR<br />PTB2</div>
        <div class="stack clock">20:34<br />10/10/2025</div>
        <button class="notice" type="button" aria-label="Notificações">${icon("notice", "i26")}</button>
      </div>
    `;
  }
}

@customElement("app-root")
export class AppRoot extends LitElement {
  static styles = [
    base,
    css`
      :host { display: flex; flex-direction: column; position: relative; min-height: 100vh; overflow: hidden; background: #e6e6e6; }
      .behind { flex: 1; width: 7px; display: grid; grid-template-rows: 220px 80px 38px 16px 632px 1fr; padding-left: 1px; }
      .navy { background: linear-gradient(#002060, #000 70%); }
      .black { background: #000; }
      .sheet { background: #f4f4f4; }
      .window {
        position: absolute; inset: 0 0 32px 7px; display: flex; flex-direction: column;
        border: solid #999; border-width: 1px 0 0 1px; box-shadow: 0 0 6px rgba(0, 0, 0, 0.5);
      }
      .title {
        display: flex; align-items: center; justify-content: space-between; height: 30px; padding: 0 0 0 8px;
        background: #fff; color: #999; font: 11px/16px "Open Sans", sans-serif;
      }
      .title h1 { margin: 0; font: inherit; }
      .title .close { width: 14px; }
      .client {
        flex: 1; padding: 14px 14px; border: solid #1e3059; border-width: 2px 0 2px 2px;
        background: linear-gradient(#002060, #fff 91%);
      }
      .menus { display: flex; gap: 16px; }
      .modal { position: absolute; inset: 0 2px 50px 0; display: grid; place-items: center; }
      certificate-dialog { width: 1130px; max-width: 100%; }
    `,
  ];

  private menus = [
    ["Contratos", "contract"], ["Certidões", "document"], ["Relatórios", "pdf"], ["Dashboards", "dashboard"], ["Sair", "power"],
  ];

  render() {
    return html`
      <div class="behind"><i></i><i class="navy"></i><i class="sheet"></i><i class="black"></i><i class="sheet"></i><i></i></div>
      <task-bar></task-bar>
      <main class="window">
        <header class="title">
          <h1>Início</h1>
          <button class="close" type="button" aria-label="Fechar">${icon("close", "i12")}</button>
        </header>
        <section class="client">
          <nav class="menus">
            ${this.menus.map(([label, name], i) => html`<menu-button label=${label} icon=${name} ?current=${i === 1}></menu-button>`)}
          </nav>
        </section>
      </main>
      <div class="modal"><certificate-dialog role="dialog" aria-label="Controle de Certidões"></certificate-dialog></div>
    `;
  }
}
